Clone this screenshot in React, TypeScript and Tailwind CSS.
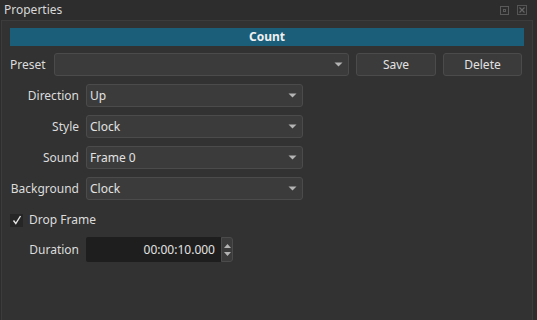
import React from "react";

function Caret() {
  return (
    <svg width="9" height="5" viewBox="0 0 9 5" className="shrink-0">
      <path d="M0.5 0.5 L8.5 0.5 L4.5 4.5 Z" fill="#b4b4b4" />
    </svg>
  );
}

function Combo({ value, width }: { value: string; width: string }) {
  return (
    <div
      className={`${width} h-[23px] flex items-center justify-between pl-[3px] pr-[5px] rounded-[3px] border border-[#4b4b4b] bg-[#3b3b3b] text-[#e2e2e2]`}
    >
      <span>{value}</span>
      <Caret />
    </div>
  );
}

function Row({ label, value, mt }: { label: string; value: string; mt: string }) {
  return (
    <div className={`flex items-center ${mt}`}>
      <div className="w-[69px] text-right text-[#dcdcdc]">{label}</div>
      <div className="ml-[7px]">
        <Combo value={value} width="w-[217px]" />
      </div>
    </div>
  );
}

export default function App() {
  return (
    <div
      className="w-[537px] h-[320px] bg-[#2d2d2d] text-[12px] leading-none text-[#dcdcdc] flex flex-col overflow-hidden"
      style={{ fontFamily: '"Noto Sans", "Open Sans", sans-serif' }}
    >
      <div className="h-[20px] flex items-center justify-between pl-[4px] pr-[10px] shrink-0">
        <span className="text-[12px] text-[#d8d8d8]">Properties</span>
        <div className="flex items-center gap-[8px]">
          <div className="w-[9px] h-[9px] border border-[#5a5a5a] flex items-center justify-center">
            <div className="w-[3px] h-[3px] border border-[#5a5a5a]" />
          </div>
          <svg width="10" height="10" viewBox="0 0 10 10">
            <rect x="0.5" y="0.5" width="9" height="9" fill="none" stroke="#555" />
            <path d="M2.5 2.5 L7.5 7.5 M7.5 2.5 L2.5 7.5" stroke="#666" strokeWidth="1.2" />
          </svg>
        </div>
      </div>
      <div className="ml-[1px] w-[532px] flex-1 border-l border-t border-r border-[#3c3c3c] bg-[#323232] px-[8px] pt-[7px]">
        <div className="h-[18px] bg-[#1b5e79] flex items-center justify-center font-bold text-[#f0f0f0] text-[12px]">
          Count
        </div>
        <div className="flex items-center mt-[7px]">
          <div className="w-[44px] text-[#dcdcdc]">Preset</div>
          <Combo value="" width="w-[295px]" />
          <div className="ml-[7px] w-[80px] h-[23px] rounded-[3px] border border-[#4b4b4b] bg-[#3b3b3b] flex items-center justify-center text-[#e2e2e2]">
            Save
          </div>
          <div className="ml-[7px] w-[79px] h-[23px] rounded-[3px] border border-[#4b4b4b] bg-[#3b3b3b] flex items-center justify-center text-[#e2e2e2]">
            Delete
          </div>
        </div>
        <Row label="Direction" value="Up" mt="mt-[8px]" />
        <Row label="Style" value="Clock" mt="mt-[8px]" />
        <Row label="Sound" value="Frame 0" mt="mt-[8px]" />
        <Row label="Background" value="Clock" mt="mt-[8px]" />
        <div className="flex items-center mt-[13px] h-[14px]">
          <div className="w-[13px] h-[13px] bg-[#262626] flex items-center justify-center">
            <svg width="10" height="10" viewBox="0 0 10 10">
              <path d="M1.5 5.5 L3.8 8.5 L8.5 1" fill="none" stroke="#e6e6e6" strokeWidth="1.4" />
            </svg>
          </div>
          <span className="ml-[6px] text-[#dcdcdc]">Drop Frame</span>
        </div>
        <div className="flex items-center mt-[10px]">
          <div className="w-[69px] text-right text-[#dcdcdc]">Duration</div>
          <div className="ml-[7px] flex h-[25px]">
            <div className="w-[135px] bg-[#1e1e1e] flex items-center justify-end pr-[6px] text-[#e2e2e2] rounded-l-[2px]">
              00:00:10.000
            </div>
            <div className="w-[12px] flex flex-col rounded-r-[3px] border border-[#4b4b4b] bg-[#3b3b3b] items-center justify-center gap-[4px]">
              <svg width="7" height="4" viewBox="0 0 7 4">
                <path d="M0 4 L7 4 L3.5 0 Z" fill="#b4b4b4" />
              </svg>
              <svg width="7" height="4" viewBox="0 0 7 4">
                <path d="M0 0 L7 0 L3.5 4 Z" fill="#b4b4b4" />
              </svg>
            </div>
          </div>
        </div>
      </div>
    </div>
  );
}
